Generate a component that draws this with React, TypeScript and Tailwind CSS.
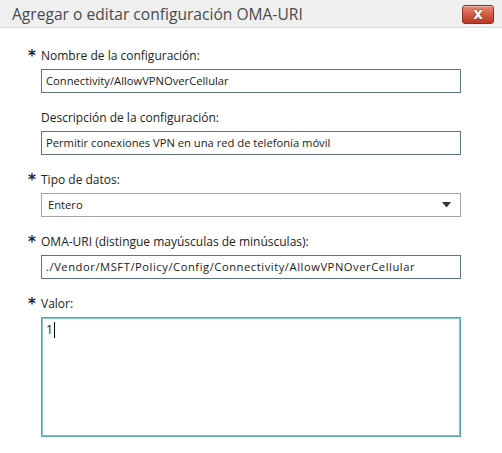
import React from "react";

const font = { fontFamily: '"Open Sans", sans-serif' };

function Field({
  label,
  required,
  children,
}: {
  label: string;
  required?: boolean;
  children: React.ReactNode;
}) {
  return (
    <div className="grid grid-cols-[13px_1fr]">
      <div
        className="h-[18px] text-[15px] font-bold leading-[19px] text-[#1d2340]"
        style={{ fontFamily: '"DejaVu Sans", sans-serif' }}
      >
        {required ? "*" : ""}
      </div>
      <div className="h-[18px] text-[12px] leading-[18px] text-[#222]">{label}</div>
      <div />
      <div className="mt-[4px]">{children}</div>
    </div>
  );
}

function TextBox({ value, className = "" }: { value: string; className?: string }) {
  return (
    <div
      className={`flex h-[24px] items-center border border-[#5d7285] bg-white px-[4px] text-[11.2px] text-[#1a1a1a] ${className}`}
    >
      {value}
    </div>
  );
}

export default function App() {
  return (
    <div className="h-[453px] w-[502px] bg-white" style={font}>
      <div className="flex h-[28px] items-center justify-between border-b border-[#d9d9d9] bg-[#efefef] pl-[12px] pr-[8px]">
        <div className="text-[15.6px] leading-[24px] text-[#4a4a4a]">
          Agregar o editar configuración OMA-URI
        </div>
        <div className="mt-[1px] flex h-[19px] w-[32px] items-center justify-center rounded-[3px] border border-[#8e2f22] bg-gradient-to-b from-[#e98d78] via-[#d45a43] to-[#b8382a] shadow-[inset_0_1px_0_rgba(255,255,255,0.35)]">
          <span
            className="text-[15px] font-bold leading-[14px] text-white [text-shadow:0_0_2px_#5a150d]"
            style={{ fontFamily: '"DejaVu Sans", sans-serif' }}
          >
            x
          </span>
        </div>
      </div>

      <div className="flex flex-col gap-[16px] pl-[28px] pr-[41px] pt-[19px]">
        <Field label="Nombre de la configuración:" required>
          <TextBox value="Connectivity/AllowVPNOverCellular" />
        </Field>
        <Field label="Descripción de la configuración:">
          <TextBox value="Permitir conexiones VPN en una red de telefonía móvil" />
        </Field>
        <Field label="Tipo de datos:" required>
          <div className="flex h-[24px] items-center justify-between border border-[#a3a3a3] bg-white pl-[6px] pr-[9px] text-[11.2px] text-[#1a1a1a]">
            <span>Entero</span>
            <svg width="9" height="6" viewBox="0 0 9 6">
              <path d="M0 0 H9 L4.5 5.5 Z" fill="#333" />
            </svg>
          </div>
        </Field>
        <Field label="OMA-URI (distingue mayúsculas de minúsculas):" required>
          <TextBox
            value="./Vendor/MSFT/Policy/Config/Connectivity/AllowVPNOverCellular"
            className="tracking-[0.55px]"
          />
        </Field>
        <Field label="Valor:" required>
          <div className="h-[120px] border border-[#5f9fb3] bg-white px-[4px] pt-[3px] shadow-[inset_1px_1px_0_#80c4d8,inset_-1px_-1px_0_#80c4d8]">
            <div className="flex items-center text-[12px] leading-[17px] text-[#1a1a1a]">
              <span>1</span>
              <span className="ml-[1px] inline-block h-[16px] w-[1px] bg-black" />
            </div>
          </div>
        </Field>
      </div>
    </div>
  );
}
